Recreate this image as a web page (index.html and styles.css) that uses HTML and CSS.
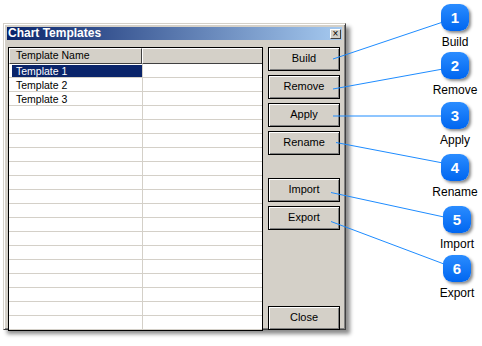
FILE: index.html
```html
<!doctype html>
<html>

<head>
    <meta charset="UTF-8">
    <title>Chart Templates</title>
    <link rel="stylesheet" href="styles.css">
</head>

<body>
    <div class="stage">

        <div class="dlg">
            <div class="caption">
                <span class="caption-text">Chart Templates</span>
                <span class="close-box">&#215;</span>
            </div>
            <div class="dlg-body">
                <div class="list">
                    <div class="list-head">
                        <div class="hcell hcell-name">Template Name</div>
                        <div class="hcell hcell-rest"></div>
                    </div>
                    <div class="list-rows">
                        <div class="row"><div class="cell cell-name"><span class="sel">Template 1</span></div><div class="cell"></div></div>
                        <div class="row"><div class="cell cell-name"><span class="txt">Template 2</span></div><div class="cell"></div></div>
                        <div class="row"><div class="cell cell-name"><span class="txt">Template 3</span></div><div class="cell"></div></div>
                        <div class="row"><div class="cell cell-name"></div><div class="cell"></div></div>
                        <div class="row"><div class="cell cell-name"></div><div class="cell"></div></div>
                        <div class="row"><div class="cell cell-name"></div><div class="cell"></div></div>
                        <div class="row"><div class="cell cell-name"></div><div class="cell"></div></div>
                        <div class="row"><div class="cell cell-name"></div><div class="cell"></div></div>
                        <div class="row"><div class="cell cell-name"></div><div class="cell"></div></div>
                        <div class="row"><div class="cell cell-name"></div><div class="cell"></div></div>
                        <div class="row"><div class="cell cell-name"></div><div class="cell"></div></div>
                        <div class="row"><div class="cell cell-name"></div><div class="cell"></div></div>
                        <div class="row"><div class="cell cell-name"></div><div class="cell"></div></div>
                        <div class="row"><div class="cell cell-name"></div><div class="cell"></div></div>
                        <div class="row"><div class="cell cell-name"></div><div class="cell"></div></div>
                        <div class="row"><div class="cell cell-name"></div><div class="cell"></div></div>
                        <div class="row"><div class="cell cell-name"></div><div class="cell"></div></div>
                        <div class="row"><div class="cell cell-name"></div><div class="cell"></div></div>
                        <div class="row"><div class="cell cell-name"></div><div class="cell"></div></div>
                    </div>
                </div>
                <div class="btns">
                    <div class="btn">Build</div>
                    <div class="btn">Remove</div>
                    <div class="btn">Apply</div>
                    <div class="btn">Rename</div>
                    <div class="btn btn-gap">Import</div>
                    <div class="btn">Export</div>
                    <div class="btn btn-close">Close</div>
                </div>
            </div>
        </div>

        <!-- connector lines from the buttons to the numbered callouts -->
        <svg class="links" width="482" height="346" viewBox="0 0 482 346">
            <line x1="333" y1="59" x2="443" y2="22" />
            <line x1="333" y1="89" x2="443" y2="69" />
            <line x1="333" y1="116" x2="443" y2="116" />
            <line x1="336" y1="142.5" x2="443" y2="163" />
            <line x1="331" y1="192.5" x2="444" y2="217" />
            <line x1="331" y1="221.5" x2="444" y2="264" />
        </svg>

        <div class="callout c1"><div class="num">1</div><div class="lbl">Build</div></div>
        <div class="callout c2"><div class="num">2</div><div class="lbl">Remove</div></div>
        <div class="callout c3"><div class="num">3</div><div class="lbl">Apply</div></div>
        <div class="callout c4"><div class="num">4</div><div class="lbl">Rename</div></div>
        <div class="callout c5"><div class="num">5</div><div class="lbl">Import</div></div>
        <div class="callout c6"><div class="num">6</div><div class="lbl">Export</div></div>

    </div>
</body>

</html>
```

FILE: styles.css
```css
* {
    margin: 0;
    padding: 0;
    box-sizing: border-box;
}

body {
    background: #fff;
    font-family: "Liberation Sans", Arial, sans-serif;
    font-size: 10.5px;
    color: #000;
    overflow: hidden;
}

.stage {
    position: relative;
    width: 482px;
    height: 346px;
    padding: 23px 0 0 3px;
}

/* dialog window */
.dlg {
    width: 343px;
    height: 307px;
    background: #d4d0c8;
    border: 1px solid;
    border-color: #d4d0c8 #404040 #404040 #d4d0c8;
    box-shadow: inset 1px 1px #fff, inset -1px -1px #808080, 4px 4px 4px rgba(0, 0, 0, 0.45);
    padding: 3px 3px 2px 3px;
    display: flex;
    flex-direction: column;
}

.caption {
    height: 13px;
    background: linear-gradient(to right, #0a246a, #a6caf0);
    display: flex;
    align-items: center;
    justify-content: space-between;
    padding: 0 1px 0 1px;
}

.caption-text {
    color: #fff;
    font-weight: bold;
    font-size: 12px;
    line-height: 13px;
}

.close-box {
    width: 11px;
    height: 10px;
    background: #d4d0c8;
    border: 1px solid;
    border-color: #fff #404040 #404040 #fff;
    font-size: 10px;
    line-height: 7px;
    text-align: center;
    color: #000;
}

.dlg-body {
    flex: 1;
    display: flex;
    margin-top: 7px;
    padding-left: 1px;
}

/* template list */
.list {
    width: 255px;
    border: 1px solid #000;
    background: #fff;
    display: flex;
    flex-direction: column;
    overflow: hidden;
}

.list-head {
    display: flex;
    height: 16px;
    flex: none;
}

.hcell {
    background: #d4d0c8;
    border: 1px solid;
    border-color: #fff #404040 #404040 #fff;
    line-height: 13px;
    padding-left: 6px;
}

.hcell-name {
    width: 133px;
}

.hcell-rest {
    flex: 1;
    border-right: none;
}

.list-rows {
    flex: 1;
    overflow: hidden;
}

.row {
    display: flex;
    height: 14px;
    border-bottom: 1px solid #d4d0c8;
}

.cell {
    flex: 1;
}

.cell-name {
    flex: none;
    width: 134px;
    border-right: 1px solid #d4d0c8;
    padding: 1px 0 0 3px;
}

.sel,
.txt {
    display: block;
    height: 12px;
    line-height: 12px;
    padding-left: 4px;
}

.sel {
    background: #0a246a;
    color: #fff;
}

/* buttons */
.btns {
    width: 72px;
    margin-left: 5px;
    display: flex;
    flex-direction: column;
    gap: 4px;
    padding-bottom: 1px;
}

.btn {
    height: 24px;
    border: 1px solid #000;
    box-shadow: inset 1px 1px #fff, inset -1px -1px #808080;
    text-align: center;
    line-height: 21px;
    font-size: 11px;
}

.btn-gap {
    margin-top: 19px;
}

.btn-close {
    margin-top: auto;
}

/* callouts */
.links {
    position: absolute;
    left: 0;
    top: 0;
}

.links line {
    stroke: #1e8cff;
    stroke-width: 1;
}

.callout {
    position: absolute;
    width: 52px;
    display: flex;
    flex-direction: column;
    align-items: center;
}

.num {
    width: 28px;
    height: 27px;
    border-radius: 9px;
    background: linear-gradient(#2a8cff, #0066f0);
    box-shadow: 2px 2px 3px rgba(0, 0, 0, 0.45);
    color: #fff;
    font-weight: bold;
    font-size: 15px;
    line-height: 27px;
    text-align: center;
}

.lbl {
    margin-top: 4px;
    font-size: 12px;
    line-height: 14px;
    white-space: nowrap;
}

.c1 { left: 429px; top: 4px; }
.c2 { left: 429px; top: 52px; }
.c3 { left: 429px; top: 102px; }
.c4 { left: 429px; top: 154px; }
.c5 { left: 431px; top: 206px; }
.c6 { left: 431px; top: 255px; }
```
